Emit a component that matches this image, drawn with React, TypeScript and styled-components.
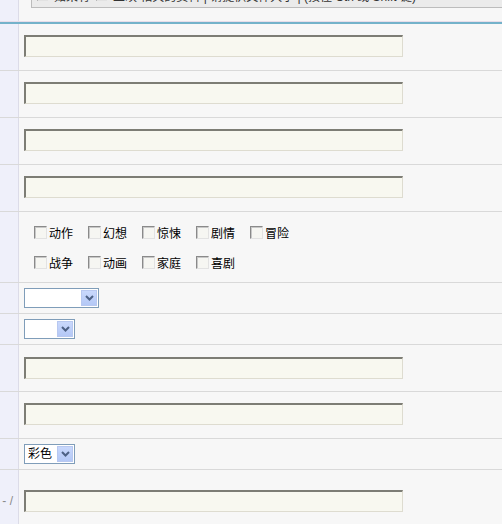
import styled, { createGlobalStyle } from "styled-components";

const GlobalStyle = createGlobalStyle`
    body {
        margin: 0;
        background: #f7f7f7;
        font-family: "Liberation Sans", "Noto Sans CJK SC", sans-serif;
        font-size: 12px;
        color: #000;
    }
`;

const Page = styled.div`
    width: 502px;
    height: 524px;
    overflow: hidden;
    background: #f7f7f7;
`;

const Header = styled.div`
    display: grid;
    grid-template-columns: 19px 1fr;
    height: 21px;
    overflow: hidden;
`;

const LabelCell = styled.div`
    background: #eff0fa;
    border-right: 1px solid #dcdce8;
    display: flex;
    align-items: center;
    justify-content: flex-end;
    padding-right: 5px;
    overflow: hidden;
    white-space: nowrap;
    color: #8a8a8a;
    font-size: 12px;
`;

const TopBox = styled.div`
    margin: -17px 0 0 12px;
    height: 24px;
    background: #ebebeb;
    border-left: 1px solid #bcbcbc;
    border-bottom: 1px solid #bcbcbc;
    display: flex;
    align-items: center;
    gap: 6px;
    padding-left: 5px;
    white-space: nowrap;
    color: #333;
`;

const Rule = styled.div`
    border-top: 1px solid #e8dde9;
    border-bottom: 2px solid #74b2ca;
`;

const Row = styled.div`
    display: grid;
    grid-template-columns: 19px 1fr;
    border-bottom: 1px solid #d9d9d9;
`;

const Field = styled.div<{ $top: number; $bottom: number }>`
    padding: ${(p) => p.$top}px 0 ${(p) => p.$bottom}px 5px;
    display: flex;
    flex-direction: column;
`;

const TextInput = styled.div`
    box-sizing: border-box;
    width: 379px;
    height: 22px;
    background: #f8f8f0;
    border-top: 2px solid #7d7d75;
    border-left: 2px solid #7d7d75;
    border-right: 1px solid #dedcd0;
    border-bottom: 1px solid #dedcd0;
`;

const CheckLine = styled.div`
    display: flex;
    height: 30px;
    align-items: center;
    padding-left: 10px;
`;

const CheckItem = styled.label`
    display: flex;
    align-items: center;
    width: 54px;
    gap: 2px;
`;

const Box = styled.span<{ $small?: boolean }>`
    box-sizing: border-box;
    width: ${(p) => (p.$small ? 11 : 13)}px;
    height: ${(p) => (p.$small ? 11 : 13)}px;
    background: #f6f6f2;
    border-top: 1px solid #8a8a8a;
    border-left: 1px solid #8a8a8a;
    border-right: 1px solid #e2e2e2;
    border-bottom: 1px solid #e2e2e2;
    box-shadow: inset 1px 1px 0 #c8c8c8;
`;

const Select = styled.div<{ $width: number }>`
    box-sizing: border-box;
    width: ${(p) => p.$width}px;
    height: 20px;
    border: 1px solid #7f9db9;
    background: #fff;
    display: flex;
    align-items: center;
    justify-content: space-between;
    padding: 1px 1px 1px 3px;
`;

const SelectText = styled.span`
    font-size: 12px;
    line-height: 16px;
`;

const DropButton = styled.span`
    box-sizing: border-box;
    width: 16px;
    height: 16px;
    border: 1px solid #b8c8f0;
    background: linear-gradient(#c9d8fc, #b4c8f6);
    display: flex;
    align-items: center;
    justify-content: center;
`;

const genres1 = ["动作", "幻想", "惊悚", "剧情", "冒险"];
const genres2 = ["战争", "动画", "家庭", "喜剧"];

const Dropdown = ({ width, value }: { width: number; value?: string }) => (
    <Select $width={width}>
        <SelectText>{value}</SelectText>
        <DropButton>
            <svg width="9" height="6" viewBox="0 0 9 6">
                <path d="M1 1 L4.5 4.5 L8 1" fill="none" stroke="#4d6185" strokeWidth="2" />
            </svg>
        </DropButton>
    </Select>
);

const InputRow = ({ top = 11, bottom = 13, label = "" }) => (
    <Row>
        <LabelCell>{label}</LabelCell>
        <Field $top={top} $bottom={bottom}>
            <TextInput />
        </Field>
    </Row>
);

const SelectRow = ({ width, value }: { width: number; value?: string }) => (
    <Row>
        <LabelCell />
        <Field $top={5} $bottom={5}>
            <Dropdown width={width} value={value} />
        </Field>
    </Row>
);

export default function App() {
    return (
        <Page>
            <GlobalStyle />
            <Header>
                <LabelCell />
                <div>
                    <TopBox>
                        <Box $small /> 如果有 <Box $small /> 上映 相关的资料 | 请提供文件大小 | (按住 Ctrl 或 Shift 键)
                    </TopBox>
                </div>
            </Header>
            <Rule />
            <InputRow />
            <InputRow />
            <InputRow />
            <InputRow />
            <Row>
                <LabelCell />
                <Field $top={5} $bottom={5}>
                    <CheckLine>
                        {genres1.map((g) => (
                            <CheckItem key={g}>
                                <Box />
                                {g}
                            </CheckItem>
                        ))}
                    </CheckLine>
                    <CheckLine>
                        {genres2.map((g) => (
                            <CheckItem key={g}>
                                <Box />
                                {g}
                            </CheckItem>
                        ))}
                    </CheckLine>
                </Field>
            </Row>
            <SelectRow width={75} />
            <SelectRow width={51} />
            <InputRow top={12} bottom={12} />
            <InputRow />
            <SelectRow width={51} value="彩色" />
            <InputRow top={20} bottom={20} label="- /" />
        </Page>
    );
}
